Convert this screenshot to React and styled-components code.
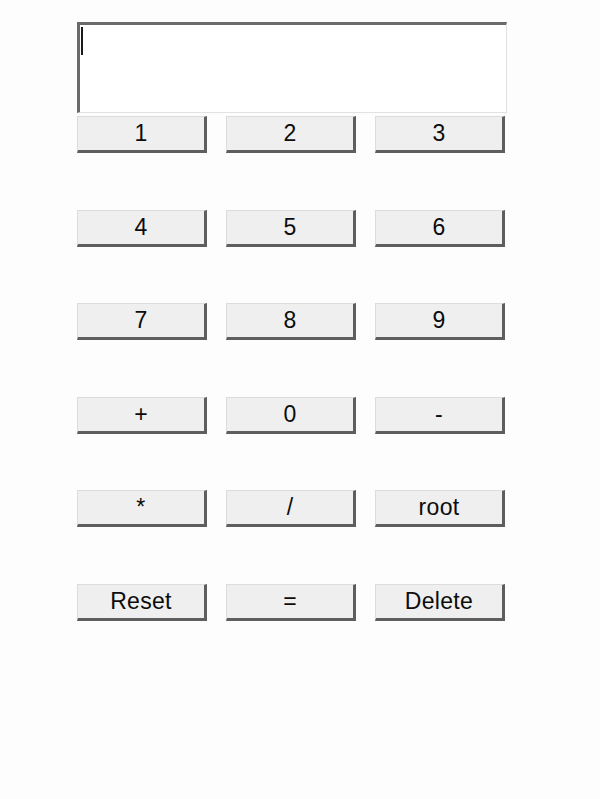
import React, { useState } from "react";
import styled, { createGlobalStyle } from "styled-components";

const GlobalStyle = createGlobalStyle`
  html, body {
    margin: 0;
    padding: 0;
    background: #fefdfe;
    font-family: "Liberation Sans", Arial, sans-serif;
  }
`;

const Page = styled.div`
  padding: 22px 0 0 77px;
`;

const DisplayWrap = styled.div`
  position: relative;
  width: 430px;
  margin: 0 0 3px 0;
`;

const Display = styled.textarea`
  display: block;
  box-sizing: border-box;
  width: 430px;
  height: 91px;
  margin: 0;
  padding: 4px 4px;
  resize: none;
  background: #ffffff;
  border-style: solid;
  border-width: 3px 1px 1px 3px;
  border-color: #6a6a6a #e2e2e2 #e2e2e2 #6a6a6a;
  font-family: "Liberation Sans", Arial, sans-serif;
  font-size: 24px;
  line-height: 28px;
  color: #111;
  caret-color: transparent;
  outline: none;
`;

// fake text cursor, drawn over the empty field
const Caret = styled.span`
  position: absolute;
  left: 4px;
  top: 5px;
  width: 2px;
  height: 28px;
  background: #1a1a1a;
  pointer-events: none;
`;

const Keys = styled.div`
  display: grid;
  grid-template-columns: repeat(3, 130px);
  grid-auto-rows: 37px;
  column-gap: 19px;
  row-gap: 56.5px;
`;

const Key = styled.button`
  box-sizing: border-box;
  height: 37px;
  padding: 0;
  background: #efefef;
  border-style: solid;
  border-width: 1px 3px 3px 1px;
  border-color: #dcdcdc #5e5e5e #5e5e5e #dcdcdc;
  font-family: "Liberation Sans", Arial, sans-serif;
  font-size: 23px;
  letter-spacing: 0.3px;
  color: #0c0c0c;
  cursor: pointer;

  &:active {
    border-color: #5e5e5e #dcdcdc #dcdcdc #5e5e5e;
  }
`;

const KEYS = ["1", "2", "3", "4", "5", "6", "7", "8", "9", "+", "0", "-", "*", "/", "root", "Reset", "=", "Delete"];

const App = () => {
  const [value, setValue] = useState("");

  const press = key => {
    if (key === "Reset") return setValue("");
    if (key === "Delete") return setValue(v => v.slice(0, -1));
    if (key === "root") return setValue(v => String(Math.sqrt(Number(v) || 0)));
    if (key === "=") {
      try {
        // eslint-disable-next-line no-new-func
        setValue(v => String(Function(`return (${v})`)()));
      } catch (e) {
        setValue("Error");
      }
      return;
    }
    setValue(v => v + key);
  };

  return (
    <Page>
      <GlobalStyle />
      <DisplayWrap>
        <Display value={value} onChange={e => setValue(e.target.value)} />
        {value === "" && <Caret />}
      </DisplayWrap>
      <Keys>
        {KEYS.map(k => (
          <Key key={k} onClick={() => press(k)}>{k}</Key>
        ))}
      </Keys>
    </Page>
  );
};

export default App;
